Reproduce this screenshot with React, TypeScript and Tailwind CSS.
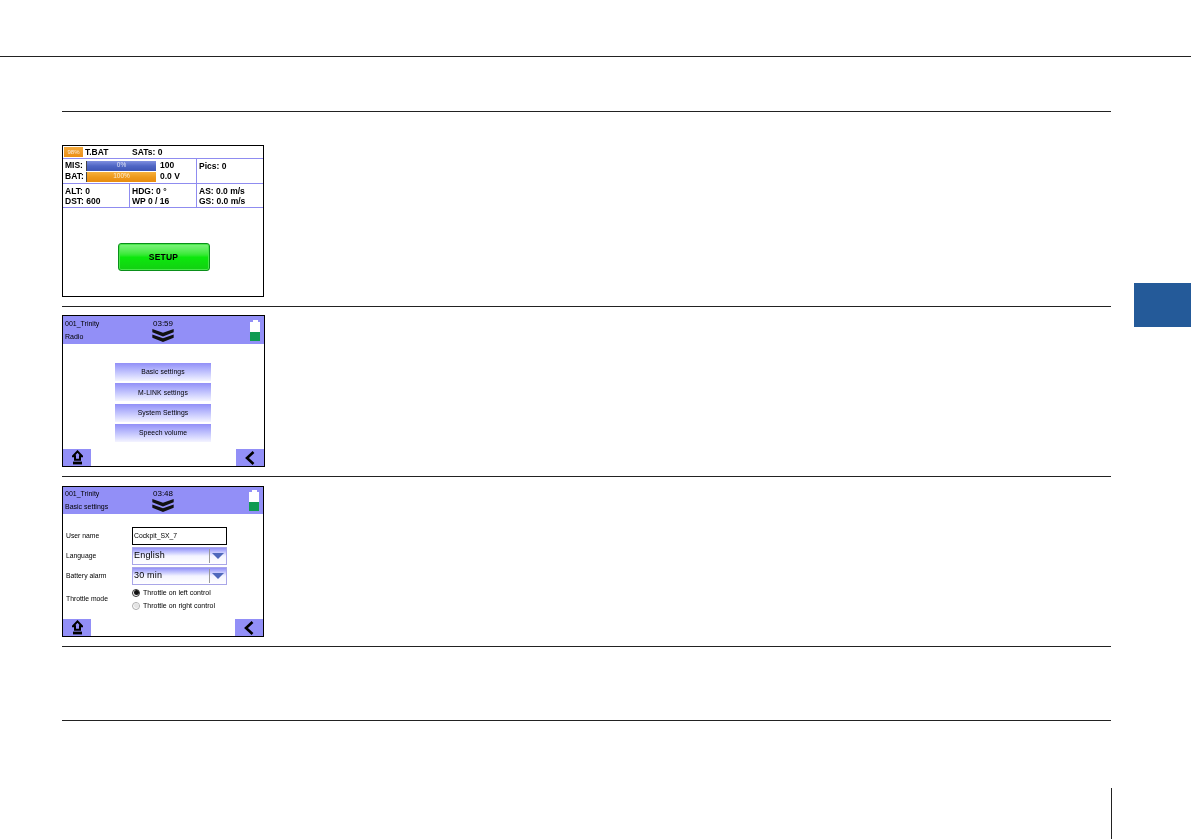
import React from "react";

const sans = "font-['Liberation_Sans',Arial,sans-serif] blur-[0.3px]";

function Bar({ label, fill, pct, value }: { label: string; fill: string; pct: string; value: string }) {
  return (
    <div className="flex h-[11px] items-center">
      <span className="w-[23px] pl-[2px] text-[8.5px] font-bold leading-none text-black">{label}</span>
      <div className={`flex h-[10px] w-[70px] items-center justify-center border-l border-[#444] text-[6.5px] leading-none text-white/80 ${fill}`}>{pct}</div>
      <span className="ml-[4px] text-[8.5px] font-bold leading-none text-black">{value}</span>
    </div>
  );
}

function Cell({ a, b, w }: { a: string; b: string; w: string }) {
  return (
    <div className={`flex flex-col justify-center border-r border-[#8f8cf0] pl-[2px] last:border-r-0 ${w}`}>
      <span className="text-[8.5px] font-bold leading-[10px] text-black">{a}</span>
      <span className="text-[8.5px] font-bold leading-[10px] text-black">{b}</span>
    </div>
  );
}

function TelemetryScreen() {
  return (
    <div className={`flex h-[152px] w-[202px] flex-col border border-black bg-white ${sans}`}>
      <div className="flex h-[12px] items-center pl-[1px]">
        <div className="flex h-[10px] w-[19px] items-center justify-center bg-gradient-to-b from-[#f2a93b] to-[#ec8f12] text-[6px] leading-none text-white/80">98%</div>
        <span className="ml-[2px] w-[47px] text-[8.5px] font-bold leading-none text-black">T.BAT</span>
        <span className="text-[8.5px] font-bold leading-none text-black">SATs: 0</span>
      </div>
      <div className="flex h-[26px] border-y border-[#8f8cf0]">
        <div className="flex w-[134px] flex-col justify-center border-r border-[#8f8cf0]">
          <Bar label="MIS:" fill="bg-gradient-to-b from-[#7f8fe0] via-[#4f66c4] to-[#3f55b4]" pct="0%" value="100" />
          <Bar label="BAT:" fill="bg-gradient-to-b from-[#f6b13c] via-[#ee9a1c] to-[#e88c0e]" pct="100%" value="0.0 V" />
        </div>
        <div className="pl-[2px] pt-[3px] text-[8.5px] font-bold leading-none text-black">Pics: 0</div>
      </div>
      <div className="flex h-[24px] border-b border-[#8f8cf0]">
        <Cell a="ALT: 0" b="DST: 600" w="w-[67px]" />
        <Cell a="HDG: 0 °" b="WP 0 / 16" w="w-[67px]" />
        <Cell a="AS: 0.0 m/s" b="GS: 0.0 m/s" w="flex-1" />
      </div>
      <div className="flex flex-1 items-start justify-center pl-[1px] pt-[35px]">
        <div className="flex h-[28px] w-[92px] items-center justify-center rounded-[3px] border border-[#0a8f1a] bg-gradient-to-b from-[#7cf27c] via-[#0ce80c] to-[#12d012] text-[8.5px] font-bold tracking-[0.2px] text-black shadow-[inset_0_0_0_1px_#4be84b]">
          SETUP
        </div>
      </div>
    </div>
  );
}

function Chevrons() {
  return (
    <svg width="22" height="13" viewBox="0 0 23 14" className="mt-[1px]">
      <path d="M0 0 L11.5 4 L23 0 V3.5 L11.5 8 L0 3.5Z" fill="#111" />
      <path d="M0 6 L11.5 10 L23 6 V9.5 L11.5 14 L0 9.5Z" fill="#111" />
    </svg>
  );
}

function Battery() {
  return (
    <div className="flex w-[10px] flex-col items-center">
      <div className="h-[2px] w-[5px] bg-white" />
      <div className="h-[10px] w-[10px] bg-white" />
      <div className="h-[9px] w-[10px] bg-[#0f9a52]" />
    </div>
  );
}

function Header({ sub, time, h }: { sub: string; time: string; h: string }) {
  return (
    <div className={`flex ${h} items-center bg-[#928ff7] pl-[2px] pr-[4px]`}>
      <div className="flex w-[87px] flex-col gap-[5px]">
        <span className="text-[7px] leading-[8px] text-black">001_Trinity</span>
        <span className="text-[7px] leading-[8px] text-black">{sub}</span>
      </div>
      <div className="flex w-[22px] flex-col items-center">
        <span className="text-[8px] leading-[9px] text-black">{time}</span>
        <Chevrons />
      </div>
      <div className="ml-auto">
        <Battery />
      </div>
    </div>
  );
}

function NavBar() {
  return (
    <div className="flex h-[17px] items-stretch justify-between">
      <div className="flex w-[28px] items-center justify-center bg-[#928ff7]">
        <svg width="11" height="15" viewBox="0 0 11 15">
          <path d="M5.5 1.4 L10 6.2 H8 V9.7 H3 V6.2 H1 Z" fill="none" stroke="#000" strokeWidth="2" />
          <rect x="1" y="11.6" width="9" height="2.8" fill="#000" />
        </svg>
      </div>
      <div className="flex w-[28px] items-center justify-center bg-[#928ff7]">
        <svg width="10" height="14" viewBox="0 0 10 14">
          <path d="M8.5 1 L2 7 L8.5 13" fill="none" stroke="#000" strokeWidth="2.6" />
        </svg>
      </div>
    </div>
  );
}

function MenuButton({ label }: { label: string }) {
  return (
    <div className="flex h-[18px] w-[96px] items-center justify-center bg-gradient-to-b from-[#928ff7] to-[#f4f4ff] pt-[1px] text-[6.8px] tracking-[0.1px] text-black">
      {label}
    </div>
  );
}

function RadioScreen() {
  return (
    <div className={`flex h-[152px] w-[203px] flex-col border border-black bg-white ${sans}`}>
      <Header sub="Radio" time="03:59" h="h-[28px]" />
      <div className="flex flex-1 flex-col items-center gap-[2.33px] pt-[19px] pr-[1px]">
        <MenuButton label="Basic settings" />
        <MenuButton label="M-LINK settings" />
        <MenuButton label="System Settings" />
        <MenuButton label="Speech volume" />
      </div>
      <NavBar />
    </div>
  );
}

function SelectBox({ value }: { value: string }) {
  return (
    <div className="flex h-[18px] w-[95px] items-center border border-[#a9a6e8] bg-gradient-to-b from-[#928ff7] via-[#f4f4ff] to-white">
      <span className="flex-1 pl-[1px] text-[9px] tracking-[0.2px] text-black">{value}</span>
      <div className="flex h-[14px] w-[17px] items-center justify-center border-l border-[#999]">
        <svg width="12" height="6" viewBox="0 0 12 6"><path d="M0 0 H12 L6 6Z" fill="#4f68bc" /></svg>
      </div>
    </div>
  );
}

function Row({ label, children }: { label: string; children: React.ReactNode }) {
  return (
    <div className="flex h-[18px] items-center">
      <span className="w-[69px] pl-[3px] text-[6.8px] text-black">{label}</span>
      {children}
    </div>
  );
}

function Radio({ on, label }: { on?: boolean; label: string }) {
  return (
    <div className="flex h-[13px] items-center gap-[3px]">
      <div className={`flex h-[8px] w-[8px] items-center justify-center rounded-full border ${on ? "border-[#333]" : "border-[#aaa]"}`}>
        <div className={`h-[5px] w-[5px] rounded-full ${on ? "bg-[#111]" : "bg-[#e4e4e4]"}`} />
      </div>
      <span className="text-[7px] leading-none text-black">{label}</span>
    </div>
  );
}

function SettingsScreen() {
  return (
    <div className={`flex h-[151px] w-[202px] flex-col border border-black bg-white ${sans}`}>
      <Header sub="Basic settings" time="03:48" h="h-[27px]" />
      <div className="flex flex-1 flex-col gap-[2px] pt-[13px]">
        <Row label="User name">
          <div className="flex h-[18px] w-[95px] items-center border border-black pl-[1px] text-[6.8px] text-black">Cockpit_SX_7</div>
        </Row>
        <Row label="Language"><SelectBox value="English" /></Row>
        <Row label="Battery alarm"><SelectBox value="30 min" /></Row>
        <div className="-mt-[1px] flex items-center">
          <span className="w-[69px] pl-[3px] text-[6.8px] text-black">Throttle mode</span>
          <div className="flex flex-col">
            <Radio on label="Throttle on left control" />
            <Radio label="Throttle on right control" />
          </div>
        </div>
      </div>
      <NavBar />
    </div>
  );
}

export default function App() {
  return (
    <div className="flex h-[839px] w-[1191px] flex-col overflow-hidden bg-white">
      <div className="h-[57px] shrink-0 border-b border-[#222]" />
      <div className="flex flex-1">
        <div className="ml-[62px] w-[1049px] pt-[54px]">
          <div className="h-[195px] border-t border-[#222] pt-[33px]"><TelemetryScreen /></div>
          <div className="h-[170px] border-t border-[#222] pt-[8px]"><RadioScreen /></div>
          <div className="h-[170px] border-t border-[#222] pt-[9px]"><SettingsScreen /></div>
          <div className="h-[75px] border-y border-[#222]" />
        </div>
        <div className="ml-[23px] pt-[226px]">
          <div className="h-[44px] w-[57px] bg-[#245a99]" />
        </div>
      </div>
      <div className="flex h-[51px] shrink-0 justify-start">
        <div className="ml-[1111px] h-full w-px bg-[#222]" />
      </div>
    </div>
  );
}
